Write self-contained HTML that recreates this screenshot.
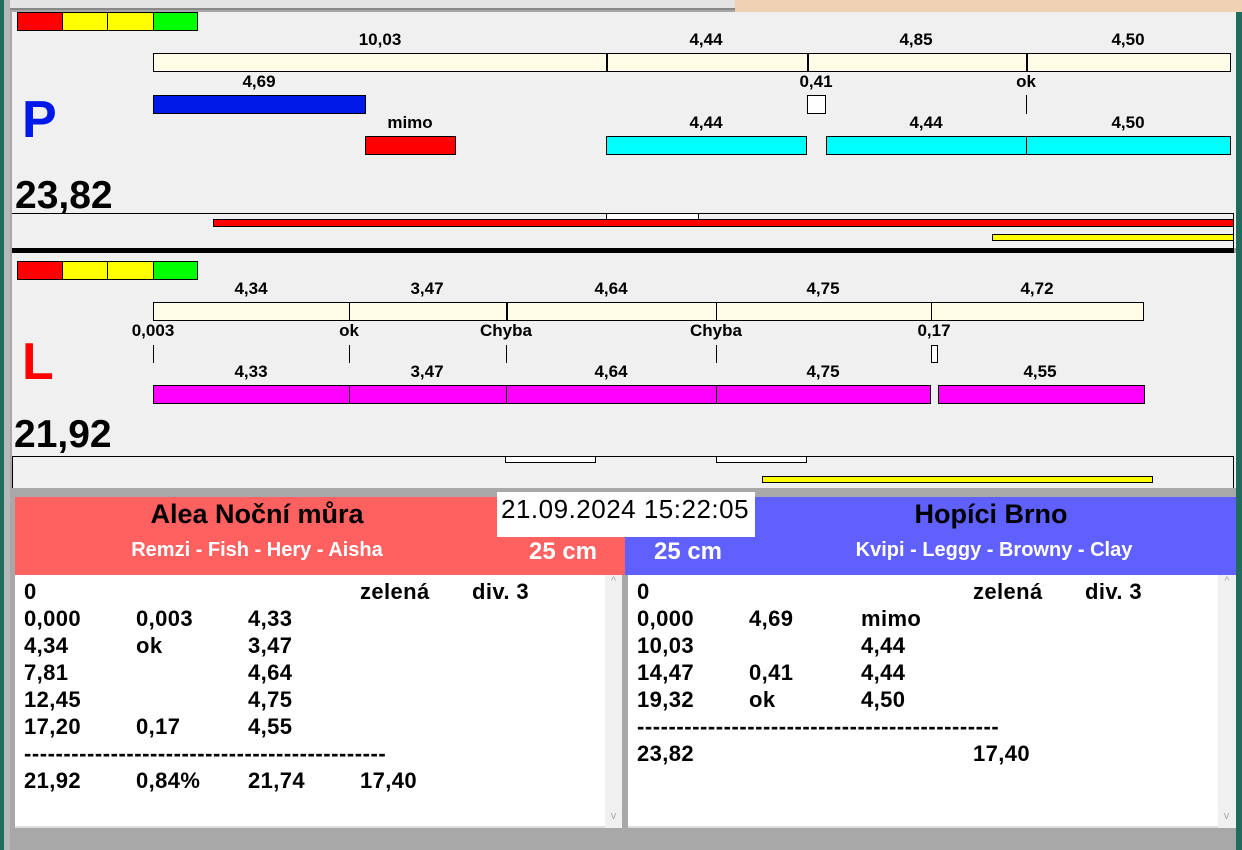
<!DOCTYPE html><html><head><meta charset="utf-8"><style>
*{margin:0;padding:0;box-sizing:border-box}
body{width:1242px;height:850px;position:relative;overflow:hidden;background:#a8a8a8;font-family:"Liberation Sans",Arial,sans-serif}
div{position:absolute}
.b{border:1px solid #000}
.t{font-weight:bold;font-size:17px;transform:translateX(-50%);white-space:nowrap;line-height:18px}
.l{font-weight:bold;font-size:22px;line-height:27px;white-space:nowrap;letter-spacing:0.4px}
.v{width:1px;background:#000}
.sb{background:#f0f0f0;color:#aaa;font-size:11px;text-align:center}
</style></head><body>
<div style="left:0;top:0;width:4px;height:850px;background:#1f6b5c"></div>
<div style="left:4px;top:0;width:6px;height:850px;background:#b8b8b8"></div>
<div style="left:10px;top:0;width:725px;height:10px;background:#e4e4e4;border-bottom:2px solid #888"></div>
<div style="left:735px;top:0;width:507px;height:12px;background:#efd2b4"></div>
<div style="left:1236px;top:12px;width:6px;height:838px;background:#1f6b5c"></div>
<!-- P panel -->
<div style="left:12px;top:12px;width:1224px;height:236px;background:#f0f0f0"></div>
<div class="b" style="left:17px;top:12px;width:46px;height:19px;background:#f00"></div>
<div class="b" style="left:62px;top:12px;width:46px;height:19px;background:#ff0"></div>
<div class="b" style="left:107px;top:12px;width:47px;height:19px;background:#ff0"></div>
<div class="b" style="left:153px;top:12px;width:45px;height:19px;background:#0f0"></div>
<div style="left:22px;top:90px;font-size:52px;font-weight:bold;color:#0018e8;line-height:60px">P</div>
<div style="left:15px;top:174px;font-size:39px;font-weight:bold;line-height:44px">23,82</div>
<div class="t" style="left:380px;top:31px">10,03</div><div class="t" style="left:706px;top:31px">4,44</div><div class="t" style="left:916px;top:31px">4,85</div><div class="t" style="left:1128px;top:31px">4,50</div>
<div class="b" style="left:153px;top:53px;width:1078px;height:19px;background:#fffde8"></div>
<div class="v" style="left:606px;top:53px;height:19px;width:2px"></div><div class="v" style="left:807px;top:53px;height:19px;width:2px"></div><div class="v" style="left:1026px;top:53px;height:19px;width:2px"></div>
<div class="t" style="left:259px;top:73px">4,69</div><div class="t" style="left:816px;top:73px">0,41</div><div class="t" style="left:1026px;top:73px">ok</div>
<div class="b" style="left:153px;top:95px;width:213px;height:19px;background:#0018e8"></div>
<div class="b" style="left:807px;top:95px;width:19px;height:19px;background:#fff"></div>
<div class="v" style="left:1026px;top:95px;height:19px"></div>
<div class="t" style="left:410px;top:114px">mimo</div><div class="t" style="left:706px;top:114px">4,44</div><div class="t" style="left:926px;top:114px">4,44</div><div class="t" style="left:1128px;top:114px">4,50</div>
<div class="b" style="left:365px;top:136px;width:91px;height:19px;background:#f00"></div>
<div class="b" style="left:606px;top:136px;width:201px;height:19px;background:#0ff"></div>
<div class="b" style="left:826px;top:136px;width:405px;height:19px;background:#0ff"></div>
<div class="v" style="left:1026px;top:136px;height:19px"></div>
<div style="left:12px;top:213px;width:1222px;height:1px;background:#000"></div>
<div class="v" style="left:1233px;top:213px;height:36px"></div>
<div class="b" style="left:606px;top:213px;width:93px;height:7px;background:#fff"></div>
<div class="b" style="left:213px;top:219px;width:1021px;height:8px;background:#f00"></div>
<div class="b" style="left:992px;top:234px;width:242px;height:7px;background:#ff0"></div>
<div style="left:12px;top:248px;width:1222px;height:5px;background:#000"></div>
<!-- L panel -->
<div style="left:12px;top:253px;width:1224px;height:235px;background:#f0f0f0"></div>
<div class="b" style="left:17px;top:261px;width:46px;height:19px;background:#f00"></div>
<div class="b" style="left:62px;top:261px;width:46px;height:19px;background:#ff0"></div>
<div class="b" style="left:107px;top:261px;width:47px;height:19px;background:#ff0"></div>
<div class="b" style="left:153px;top:261px;width:45px;height:19px;background:#0f0"></div>
<div style="left:22px;top:332px;font-size:52px;font-weight:bold;color:#f00;line-height:60px">L</div>
<div style="left:14px;top:413px;font-size:39px;font-weight:bold;line-height:44px">21,92</div>
<div class="t" style="left:251px;top:280px">4,34</div><div class="t" style="left:427px;top:280px">3,47</div><div class="t" style="left:611px;top:280px">4,64</div><div class="t" style="left:823px;top:280px">4,75</div><div class="t" style="left:1037px;top:280px">4,72</div>
<div class="b" style="left:153px;top:302px;width:991px;height:19px;background:#fffde8"></div>
<div class="v" style="left:349px;top:302px;height:19px"></div><div class="v" style="left:506px;top:302px;height:19px;width:2px"></div><div class="v" style="left:716px;top:302px;height:19px"></div><div class="v" style="left:931px;top:302px;height:19px"></div>
<div class="t" style="left:153px;top:322px">0,003</div><div class="t" style="left:349px;top:322px">ok</div><div class="t" style="left:506px;top:322px">Chyba</div><div class="t" style="left:716px;top:322px">Chyba</div><div class="t" style="left:934px;top:322px">0,17</div>
<div class="v" style="left:153px;top:345px;height:18px"></div><div class="v" style="left:349px;top:345px;height:18px"></div><div class="v" style="left:506px;top:345px;height:18px"></div><div class="v" style="left:716px;top:345px;height:18px"></div>
<div class="b" style="left:931px;top:345px;width:7px;height:18px;background:#fff"></div>
<div class="t" style="left:251px;top:363px">4,33</div><div class="t" style="left:427px;top:363px">3,47</div><div class="t" style="left:611px;top:363px">4,64</div><div class="t" style="left:823px;top:363px">4,75</div><div class="t" style="left:1040px;top:363px">4,55</div>
<div class="b" style="left:153px;top:385px;width:778px;height:19px;background:#f0f"></div>
<div class="v" style="left:349px;top:385px;height:19px"></div><div class="v" style="left:506px;top:385px;height:19px"></div><div class="v" style="left:716px;top:385px;height:19px"></div>
<div class="b" style="left:938px;top:385px;width:207px;height:19px;background:#f0f"></div>
<div style="left:12px;top:456px;width:1222px;height:1px;background:#000"></div>
<div class="v" style="left:12px;top:456px;height:32px"></div><div class="v" style="left:1233px;top:456px;height:32px"></div>
<div class="b" style="left:505px;top:456px;width:91px;height:7px;background:#fff"></div>
<div class="b" style="left:716px;top:456px;width:91px;height:7px;background:#fff"></div>
<div class="b" style="left:762px;top:476px;width:391px;height:7px;background:#ff0"></div>
<!-- headers -->
<div style="left:15px;top:497px;width:610px;height:78px;background:#ff6060"></div>
<div style="left:625px;top:497px;width:611px;height:78px;background:#6060ff"></div>
<div style="left:497px;top:492px;width:258px;height:45px;background:#fff"></div>
<div style="left:501px;top:494px;font-size:26px;line-height:30px;letter-spacing:0.5px">21.09.2024 15:22:05</div>
<div class="t" style="left:257px;top:499px;font-size:27px;line-height:30px">Alea Noční můra</div>
<div class="t" style="left:257px;top:539px;font-size:20px;line-height:22px;color:#fff">Remzi - Fish - Hery - Aisha</div>
<div class="t" style="left:563px;top:539px;font-size:24px;line-height:26px;color:#fff">25 cm</div>
<div class="t" style="left:688px;top:539px;font-size:24px;line-height:26px;color:#fff">25 cm</div>
<div class="t" style="left:991px;top:499px;font-size:27px;line-height:30px">Hopíci Brno</div>
<div class="t" style="left:994px;top:539px;font-size:20px;line-height:22px;color:#fff">Kvipi - Leggy - Browny - Clay</div>
<!-- lists -->
<div style="left:15px;top:575px;width:607px;height:253px;background:#fff;border-bottom:2px solid #ddd"></div>
<div class="sb" style="left:605px;top:575px;width:17px;height:253px">^</div>
<div style="left:607px;top:810px;width:13px;color:#aaa;font-size:11px;text-align:center">v</div>
<div style="left:622px;top:575px;width:6px;height:253px;background:#a8a8a8"></div>
<div style="left:628px;top:575px;width:608px;height:253px;background:#fff;border-bottom:2px solid #ddd"></div>
<div class="sb" style="left:1218px;top:575px;width:18px;height:253px">^</div>
<div style="left:1220px;top:810px;width:13px;color:#aaa;font-size:11px;text-align:center">v</div>
<div class="l" style="left:24px;top:578px">0<br>0,000<br>4,34<br>7,81<br>12,45<br>17,20<br><span style="letter-spacing:0.55px">----------------------------------------------</span><br>21,92</div>
<div class="l" style="left:136px;top:605px">0,003<br>ok<br><br><br>0,17<br><br>0,84%</div>
<div class="l" style="left:248px;top:605px">4,33<br>3,47<br>4,64<br>4,75<br>4,55<br><br>21,74</div>
<div class="l" style="left:360px;top:578px">zelená<br><br><br><br><br><br><br>17,40</div>
<div class="l" style="left:472px;top:578px">div. 3</div>
<div class="l" style="left:637px;top:578px">0<br>0,000<br>10,03<br>14,47<br>19,32<br><span style="letter-spacing:0.55px">----------------------------------------------</span><br>23,82</div>
<div class="l" style="left:749px;top:605px">4,69<br><br>0,41<br>ok</div>
<div class="l" style="left:861px;top:605px">mimo<br>4,44<br>4,44<br>4,50</div>
<div class="l" style="left:973px;top:578px">zelená<br><br><br><br><br><br>17,40</div>
<div class="l" style="left:1085px;top:578px">div. 3</div>
</body></html>
